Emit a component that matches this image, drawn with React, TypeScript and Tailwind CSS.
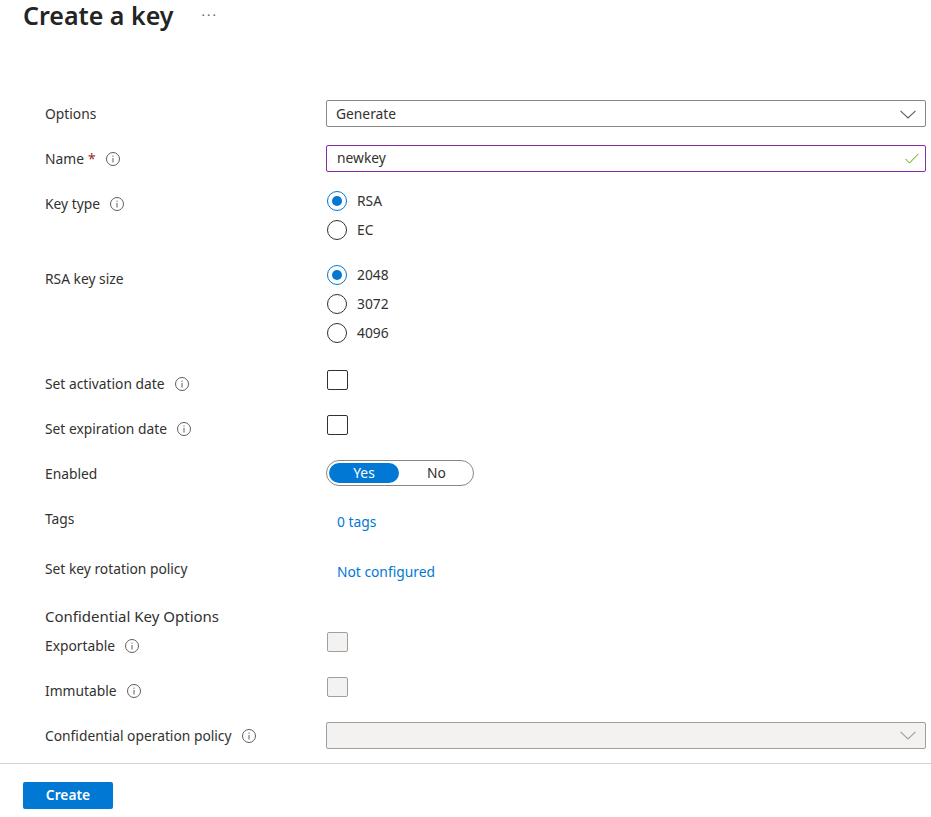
const font = "font-['Noto_Sans','Liberation_Sans',sans-serif]";

function Info() {
  return (
    <svg width="14" height="14" viewBox="0 0 14 14" fill="none" className="shrink-0">
      <circle cx="7" cy="7" r="6.5" stroke="#605e5c" />
      <rect x="6.5" y="6" width="1" height="4.5" fill="#605e5c" />
      <rect x="6.5" y="3.6" width="1" height="1.2" fill="#605e5c" />
    </svg>
  );
}

function Chevron({ color }: { color: string }) {
  return (
    <svg width="16" height="9" viewBox="0 0 16 9" fill="none" className="shrink-0">
      <path d="M0.5 0.8 L8 8 L15.5 0.8" stroke={color} strokeWidth="1.1" />
    </svg>
  );
}

function Row({ label, info, star, mb, children }: { label: string; info?: boolean; star?: boolean; mb: string; children: React.ReactNode }) {
  return (
    <div className={`flex ${mb}`}>
      <div className="flex h-[28px] w-[326px] shrink-0 items-center gap-[10px] pl-[45px]">
        <span>
          {label}
          {star && <span className="ml-1 text-[#a4262c]">*</span>}
        </span>
        {info && <Info />}
      </div>
      <div className="flex-1 pr-[5px]">{children}</div>
    </div>
  );
}

function Radio({ label, on }: { label: string; on?: boolean }) {
  return (
    <div className="flex h-[20px] items-center gap-[10px] pl-px">
      <span className={`flex h-[20px] w-[20px] items-center justify-center rounded-full border ${on ? "border-[#0078d4]" : "border-[#323130]"}`}>
        {on && <span className="h-[10px] w-[10px] rounded-full bg-[#0078d4]" />}
      </span>
      <span>{label}</span>
    </div>
  );
}

function Check({ disabled }: { disabled?: boolean }) {
  return (
    <div className="pl-px">
      <div className={`h-[20px] w-[21px] rounded-[2px] border ${disabled ? "border-[#a19f9d] bg-[#f3f2f1]" : "border-[#323130]"}`} />
    </div>
  );
}

export default function App() {
  return (
    <div className={`${font} flex min-h-screen w-full flex-col bg-white text-[13.8px] text-[#323130]`}>
      <div className="flex h-[100px] items-start pl-[23px]">
        <h1 className="text-[25px] leading-[30px] font-semibold text-[#242424]">Create a key</h1>
        <span className="ml-[28px] text-[13px] leading-[30px] tracking-[2px] text-[#605e5c]">···</span>
      </div>

      <Row label="Options" mb="mb-[17px]">
        <div className="flex h-[27px] items-center justify-between rounded-[2px] border border-[#8a8886] pt-px pr-[9px] pl-[9px]">
          <span>Generate</span>
          <Chevron color="#605e5c" />
        </div>
      </Row>
      <Row label="Name" star info mb="mb-[17px]">
        <div className="flex h-[27px] items-center justify-between rounded-[2px] border border-[#8a2da5] pr-[6px] pl-[10px]">
          <span>newkey</span>
          <svg width="14" height="11" viewBox="0 0 14 11" fill="none">
            <path d="M0.5 6 L4.5 10 L13.5 0.8" stroke="#57a300" strokeWidth="1" />
          </svg>
        </div>
      </Row>
      <Row label="Key type" info mb="mb-[25px]">
        <div className="flex flex-col gap-[9px] pt-px">
          <Radio label="RSA" on />
          <Radio label="EC" />
        </div>
      </Row>
      <Row label="RSA key size" mb="mb-[27px]">
        <div className="flex flex-col gap-[9px]">
          <Radio label="2048" on />
          <Radio label="3072" />
          <Radio label="4096" />
        </div>
      </Row>
      <Row label="Set activation date" info mb="mb-[17px]">
        <Check />
      </Row>
      <Row label="Set expiration date" info mb="mb-[17px]">
        <Check />
      </Row>
      <Row label="Enabled" mb="mb-[17px]">
        <div className="flex h-[26px] w-[148px] items-center rounded-full border border-[#8a8886] pl-[2px]">
          <span className="flex h-[20px] w-[70px] items-center justify-center rounded-full bg-[#0078d4] text-white">Yes</span>
          <span className="flex-1 pl-px text-center">No</span>
        </div>
      </Row>
      <Row label="Tags" mb="mb-[16px]">
        <div className="flex h-[34px] items-center pl-[11px] text-[#0078d4]">0 tags</div>
      </Row>
      <Row label="Set key rotation policy" mb="mb-[16px]">
        <div className="flex h-[34px] items-center pl-[11px] text-[#0078d4]">Not configured</div>
      </Row>
      <div className="mb-[3px] flex h-[24px] items-center pb-[2px] pl-[45px] text-[15px]">Confidential Key Options</div>
      <Row label="Exportable" info mb="mb-[17px]">
        <Check disabled />
      </Row>
      <Row label="Immutable" info mb="mb-[17px]">
        <Check disabled />
      </Row>
      <Row label="Confidential operation policy" info mb="mb-[13px]">
        <div className="flex h-[27px] items-center justify-end rounded-[2px] border border-[#a19f9d] bg-[#f3f2f1] pr-[9px]">
          <Chevron color="#a19f9d" />
        </div>
      </Row>

      <div className="border-t border-[#d6d6d6] pt-[18px] pl-[23px]">
        <button className="flex h-[27px] w-[90px] items-center justify-center rounded-[2px] bg-[#0078d4] font-semibold text-white">Create</button>
      </div>
    </div>
  );
}
